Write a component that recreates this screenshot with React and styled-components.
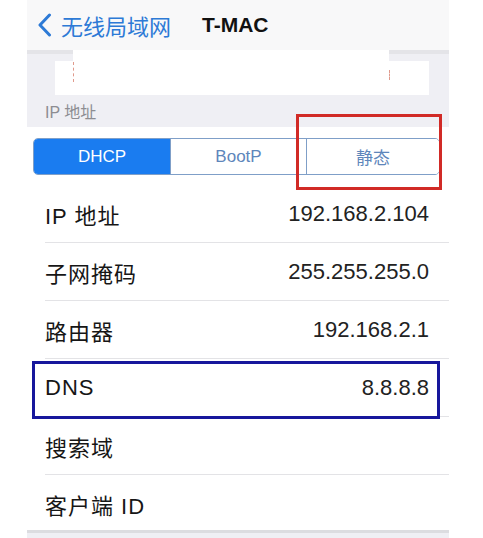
import React from 'react';
import styled, { createGlobalStyle } from 'styled-components';

const GlobalStyle = createGlobalStyle`
  html, body {
    margin: 0;
    padding: 0;
    background: #ffffff;
  }

  body {
    font-family: "Liberation Sans", "Noto Sans CJK SC", sans-serif;
  }
`;

const Screen = styled.div`
  width: 422px;
  margin: 0 34px 0 27px;
  background-color: #efeff4;
  height: 538px;
  overflow: hidden;
`;

const NavBar = styled.div`
  height: 50px;
  display: flex;
  align-items: center;
  padding-left: 10px;
  background-color: #f8f8f9;
`;

const BackButton = styled.div`
  display: flex;
  align-items: center;
  gap: 9px;
  color: #2d7ad6;
  font-size: 22px;
`;

const Title = styled.div`
  margin-left: 31px;
  font-size: 21px;
  font-weight: bold;
  color: #111111;
`;

const HiddenArea = styled.div`
  height: 45px;
  padding: 7px 20px 0 28px;
  box-sizing: border-box;
  border-top: 4px solid #e4e4e8;
`;

const HiddenField = styled.div`
  position: relative;
  height: 34px;
  background-color: #ffffff;

  &::before {
    content: '';
    position: absolute;
    top: -11px;
    left: 18px;
    right: 40px;
    height: 11px;
    background-color: #ffffff;
  }
`;

const Mark = styled.span`
  position: absolute;
  top: ${(p) => p.$top}px;
  left: ${(p) => p.$left}px;
  width: 1px;
  height: ${(p) => p.$height}px;
  border-left: 1px dashed #e09a8c;
`;

const SectionHeader = styled.div`
  height: 32px;
  padding-left: 18px;
  display: flex;
  align-items: center;
  font-size: 16px;
  color: #8d8d92;
`;

const Card = styled.div`
  background-color: #ffffff;
`;

const SegmentWrap = styled.div`
  position: relative;
  padding: 11px 9px 10px 6px;
`;

const Segmented = styled.div`
  display: grid;
  grid-template-columns: 136px 136px 1fr;
  height: 37px;
  border: 1.5px solid #7f9fc8;
  border-radius: 5px;
  overflow: hidden;
  box-sizing: border-box;
`;

const Segment = styled.div`
  display: flex;
  align-items: center;
  justify-content: center;
  font-size: 17px;
  color: ${(p) => (p.$active ? '#ffffff' : '#5e86bb')};
  background-color: ${(p) => (p.$active ? '#1a7cf0' : '#ffffff')};
  border-left: ${(p) => (p.$first ? 'none' : '1.5px solid #7f9fc8')};
`;

const RedBox = styled.div`
  position: absolute;
  left: 269px;
  top: -13px;
  width: 146px;
  height: 76px;
  border: 3px solid #d12a26;
  box-sizing: border-box;
`;

const Row = styled.div`
  position: relative;
  height: 58px;
  display: flex;
  align-items: center;
  justify-content: space-between;
  padding: 0 20px 0 18px;
  font-size: 22px;
  color: #161616;

  &::after {
    content: '';
    position: absolute;
    left: ${(p) => (p.$last ? 0 : 18)}px;
    right: 0;
    bottom: 0;
    height: ${(p) => (p.$last ? 3 : 1)}px;
    background-color: ${(p) => (p.$last ? '#dcdce0' : '#e3e3e6')};
  }
`;

const Label = styled.span`
  letter-spacing: 1px;
`;

const Value = styled.span`
  color: #222222;
`;

const BlueBox = styled.div`
  position: absolute;
  left: 5px;
  right: 9px;
  top: 2px;
  height: 58px;
  border: 3px solid #17179c;
  box-sizing: border-box;
  z-index: 1;
`;

const rows = [
  { label: 'IP 地址', value: '192.168.2.104' },
  { label: '子网掩码', value: '255.255.255.0' },
  { label: '路由器', value: '192.168.2.1' },
  { label: 'DNS', value: '8.8.8.8', marked: true },
  { label: '搜索域', value: '' },
  { label: '客户端 ID', value: '' },
];

const App = () => {
  return (
    <>
      <GlobalStyle />
      <Screen>
        <NavBar>
          <BackButton>
            <svg width="15" height="24" viewBox="0 0 15 24">
              <path d="M12.5 2 L3 12 L12.5 22" fill="none" stroke="#2d7ad6" strokeWidth="3" strokeLinecap="round" strokeLinejoin="round" />
            </svg>
            无线局域网
          </BackButton>
          <Title>T-MAC</Title>
        </NavBar>
        <HiddenArea>
          <HiddenField>
            <Mark $left={18} $top={1} $height={20} />
            <Mark $left={334} $top={9} $height={10} />
          </HiddenField>
        </HiddenArea>
        <SectionHeader>IP 地址</SectionHeader>
        <Card>
          <SegmentWrap>
            <Segmented>
              <Segment $active $first>DHCP</Segment>
              <Segment>BootP</Segment>
              <Segment>静态</Segment>
            </Segmented>
            <RedBox />
          </SegmentWrap>
          {rows.map((row, index) => (
            <Row key={index} $last={index === rows.length - 1}>
              <Label>{row.label}</Label>
              <Value>{row.value}</Value>
              {row.marked && <BlueBox />}
            </Row>
          ))}
        </Card>
      </Screen>
    </>
  );
};

export default App;
